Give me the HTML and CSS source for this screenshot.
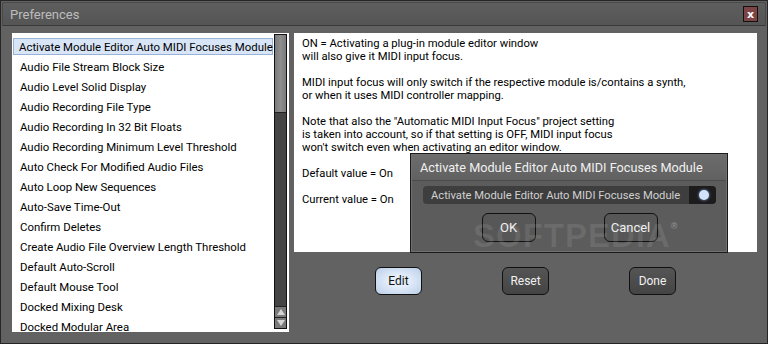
FILE: index.html
```html
<!DOCTYPE html>
<html lang="en">
<head>
    <meta charset="UTF-8">
    <title>Preferences</title>
    <link rel="stylesheet" href="styles.css">
</head>
<body>
    <div class="window">
        <div class="titlebar">
            <span class="title">Preferences</span>
            <button class="close-btn">x</button>
        </div>

        <div class="content">
            <div class="pref-list">
                <ul class="items">
                    <li class="selected">Activate Module Editor Auto MIDI Focuses Module</li>
                    <li>Audio File Stream Block Size</li>
                    <li>Audio Level Solid Display</li>
                    <li>Audio Recording File Type</li>
                    <li>Audio Recording In 32 Bit Floats</li>
                    <li>Audio Recording Minimum Level Threshold</li>
                    <li>Auto Check For Modified Audio Files</li>
                    <li>Auto Loop New Sequences</li>
                    <li>Auto-Save Time-Out</li>
                    <li>Confirm Deletes</li>
                    <li>Create Audio File Overview Length Threshold</li>
                    <li>Default Auto-Scroll</li>
                    <li>Default Mouse Tool</li>
                    <li>Docked Mixing Desk</li>
                    <li>Docked Modular Area</li>
                </ul>
                <div class="scrollbar">
                    <div class="thumb"></div>
                    <div class="track"></div>
                    <div class="arrow up"></div>
                    <div class="arrow down"></div>
                </div>
            </div>

            <div class="detail">
                <div class="description">
                    <p>ON = Activating a plug-in module editor window<br>will also give it MIDI input focus.</p>
                    <p>MIDI input focus will only switch if the respective module is/contains a synth,<br>or when it uses MIDI controller mapping.</p>
                    <p>Note that also the "Automatic MIDI Input Focus" project setting<br>is taken into account, so if that setting is OFF, MIDI input focus<br>won't switch even when activating an editor window.</p>
                    <p>Default value = On</p>
                    <p>Current value = On</p>
                </div>
                <div class="actions">
                    <button class="btn btn-active">Edit</button>
                    <button class="btn">Reset</button>
                    <button class="btn">Done</button>
                </div>
            </div>
        </div>

        <!-- edit dialog, sits over the description -->
        <div class="dialog">
            <div class="dialog-title">Activate Module Editor Auto MIDI Focuses Module</div>
            <div class="dialog-body">
                <div class="toggle-row">
                    <span class="toggle-label">Activate Module Editor Auto MIDI Focuses Module</span>
                    <span class="toggle"><span class="knob"></span></span>
                </div>
                <div class="dialog-actions">
                    <button class="btn dlg-btn">OK</button>
                    <button class="btn dlg-btn">Cancel</button>
                </div>
            </div>
            <div class="watermark">SOFTPEDIA<sup>®</sup></div>
        </div>
    </div>
</body>
</html>
```

FILE: styles.css
```css
* {
    box-sizing: border-box;
}
body {
    margin: 0;
    font-family: Roboto, "Liberation Sans", sans-serif;
    background: #2b2b2b;
}
.window {
    position: relative;
    width: 768px;
    height: 344px;
    border: 1px solid #262626;
    background: #626262;
    overflow: hidden;
}
.titlebar {
    height: 24px;
    display: flex;
    align-items: center;
    justify-content: space-between;
    padding: 0 7px 0 7px;
    background: linear-gradient(#5e5e5e, #555555);
    border: 1px solid #4a4a4a;
    border-bottom: 1px solid #3a3a3a;
    margin: 1px 1px 0 1px;
}
.title {
    color: #bdbdbd;
    font-size: 13px;
}
.close-btn {
    width: 15px;
    height: 16px;
    padding: 0;
    border: 1px solid #111;
    background: #7c4444;
    color: #fff;
    font-weight: bold;
    font-size: 11px;
    line-height: 13px;
    font-family: "DejaVu Sans", sans-serif;
}
.content {
    display: flex;
    gap: 5px;
    padding: 7px 10px 0 11px;
}
.pref-list {
    width: 277px;
    height: 299px;
    background: #fff;
    display: flex;
}
.items {
    flex: 1;
    list-style: none;
    margin: 0;
    padding: 5px 1px 0 1px;
    overflow: hidden;
}
.items li {
    height: 17px;
    line-height: 17px;
    margin-bottom: 3px;
    padding-left: 6px;
    font-size: 11.4px;
    color: #000;
    white-space: nowrap;
    border: 1px solid transparent;
}
.items li.selected {
    background: #d8e5f7;
    border-color: #98b2d8;
    padding-left: 5px;
}
.scrollbar {
    width: 13px;
    margin: 1px 2px 3px 0;
    border: 1px solid #111;
    background: #444;
    display: flex;
    flex-direction: column;
}
.thumb {
    height: 78px;
    background: linear-gradient(90deg, #7a7a7a, #8e8e8e 50%, #7a7a7a);
    border-bottom: 1px solid #222;
}
.track {
    flex: 1;
}
.arrow {
    height: 11px;
    background: #7a7a7a;
    border-top: 1px solid #222;
    position: relative;
}
.arrow::after {
    content: "";
    position: absolute;
    left: 2px;
    top: 2px;
    border-left: 4px solid transparent;
    border-right: 4px solid transparent;
}
.arrow.up::after {
    border-bottom: 6px solid #d4d4d4;
}
.arrow.down::after {
    border-top: 6px solid #d4d4d4;
}
.detail {
    width: 463px;
}
.description {
    height: 219px;
    background: #fff;
    padding: 4px 8px;
    font-size: 11.25px;
    line-height: 13px;
    color: #000;
}
.description p {
    margin: 0 0 13px 0;
}
.actions {
    display: flex;
    justify-content: center;
    gap: 80px;
    margin-top: 15px;
}
.btn {
    width: 47px;
    height: 28px;
    border: 1px solid #111;
    border-radius: 6px;
    background: linear-gradient(#555, #444);
    color: #f0f0f0;
    font-family: Roboto, "Liberation Sans", sans-serif;
    font-size: 12px;
    padding: 0;
}
.btn-active {
    background: radial-gradient(ellipse at center, #e6effb 30%, #b9cde8);
    color: #111;
}
.dialog {
    position: absolute;
    left: 409px;
    top: 152px;
    width: 318px;
    height: 100px;
    border: 1px solid #1a1a1a;
    background: #5c5c5c;
    box-shadow: inset 0 0 0 1px #707070;
}
.dialog-title {
    height: 26px;
    line-height: 26px;
    padding-left: 8px;
    font-size: 12.7px;
    color: #f0f0f0;
    background: linear-gradient(#6c6c6c, #616161);
    border-bottom: 1px solid #4c4c4c;
    margin: 1px 1px 0 1px;
    white-space: nowrap;
}
.dialog-body {
    padding: 5px 11px 0 12px;
}
.toggle-row {
    display: flex;
    height: 18px;
    width: 293px;
    background: #3e3e3e;
    border-radius: 4px;
    align-items: center;
    justify-content: space-between;
}
.toggle-label {
    padding-left: 8px;
    font-size: 11.2px;
    color: #d0d0d0;
    white-space: nowrap;
}
.toggle {
    width: 27px;
    height: 18px;
    background: #1c1c1c;
    border-radius: 0 4px 4px 0;
    display: flex;
    align-items: center;
    justify-content: center;
    padding-left: 3px;
}
.knob {
    width: 10px;
    height: 10px;
    border-radius: 50%;
    background: #d2e2fb;
    box-shadow: 0 0 3px #8aa8e0;
}
.dialog-actions {
    display: flex;
    justify-content: center;
    gap: 68px;
    margin-top: 9px;
}
.dlg-btn {
    width: 54px;
    height: 29px;
    font-size: 13px;
    background: #575757;
}
.watermark {
    position: absolute;
    left: 62px;
    top: 63px;
    font-family: "Liberation Sans", sans-serif;
    font-weight: bold;
    font-size: 33px;
    letter-spacing: 1px;
    color: rgba(255, 255, 255, 0.09);
    pointer-events: none;
}
.watermark sup {
    font-size: 9px;
    vertical-align: 18px;
    color: rgba(255, 255, 255, 0.3);
}
```
